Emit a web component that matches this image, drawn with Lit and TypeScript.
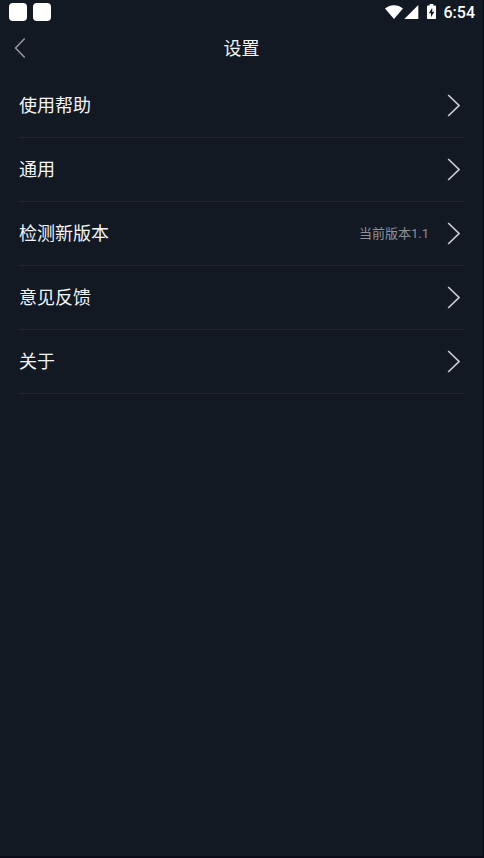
import { LitElement, html, css, nothing } from "lit";
import { customElement, property } from "lit/decorators.js";

interface SettingsItem {
  label: string;
  note?: string;
}

const ITEMS: SettingsItem[] = [
  { label: "使用帮助" },
  { label: "通用" },
  { label: "检测新版本", note: "当前版本1.1" },
  { label: "意见反馈" },
  { label: "关于" },
];

@customElement("status-bar")
export class StatusBar extends LitElement {
  static styles = css`
    :host {
      display: flex;
      align-items: center;
      height: 24px;
      padding: 0 8px 0 9px;
      color: #fff;
    }
    .notices {
      display: flex;
      flex: 1;
      gap: 6px;
    }
    .notice {
      width: 18px;
      height: 18px;
      border-radius: 4px;
      background: #fff;
    }
    svg {
      display: block;
      fill: currentColor;
    }
    .signal {
      margin-left: 1px;
    }
    .battery {
      margin: 0 8px;
    }
    .time {
      font: 500 16px/24px Roboto, sans-serif;
      padding-top: 2px;
    }
  `;

  render() {
    return html`
      <div class="notices">
        <span class="notice"></span>
        <span class="notice"></span>
      </div>
      <svg width="18" height="14" viewBox="0 0 18 14" aria-hidden="true">
        <path d="M0 3.6C5-.9 13-.9 18 3.6L9 14Z" />
      </svg>
      <svg class="signal" width="15" height="14" viewBox="0 0 15 14" aria-hidden="true">
        <path d="M14.3 0V14H.3Z" />
      </svg>
      <svg class="battery" width="9" height="16" viewBox="0 0 9 16" aria-hidden="true">
        <path
          fill-rule="evenodd"
          d="M2.7 0H6.3V1.4H8.2Q9 1.4 9 2.2V14.2Q9 15 8.2 15H.8Q0 15 0 14.2V2.2Q0 1.4 .8 1.4H2.7ZM5.2 3.8L1.9 9.2H4V13.2L7.2 7.7H5.2Z"
        />
      </svg>
      <span class="time">6:54</span>
    `;
  }
}

@customElement("settings-row")
export class SettingsRow extends LitElement {
  @property() label = "";
  @property() note = "";

  static styles = css`
    :host {
      display: block;
      border-bottom: 1px solid #23262f;
    }
    .row {
      display: flex;
      align-items: center;
      width: 100%;
      height: 63px;
      padding: 0 5px 0 0;
      border: 0;
      background: none;
      color: #f4f5f7;
      font: inherit;
      text-align: left;
      cursor: pointer;
    }
    .label {
      flex: 1;
    }
    .note {
      margin-right: 18px;
      color: #8b8f97;
      font-size: 13px;
    }
    svg {
      display: block;
      fill: none;
      stroke: #c9ccd2;
      stroke-width: 1.7;
    }
  `;

  render() {
    return html`
      <button class="row" type="button">
        <span class="label">${this.label}</span>
        ${this.note ? html`<span class="note">${this.note}</span>` : nothing}
        <svg width="13" height="23" viewBox="0 0 13 23" aria-hidden="true">
          <path d="M1.2 1L12 11.5L1.2 22" />
        </svg>
      </button>
    `;
  }
}

@customElement("app-root")
export class AppRoot extends LitElement {
  static styles = css`
    :host {
      display: block;
      box-sizing: border-box;
      min-height: 100vh;
      border-right: 1px solid #080a12;
      border-bottom: 2px solid #0b0c19;
      background: #121923;
      color: #f4f5f7;
      font: 18px/24px Roboto, "Noto Sans CJK SC", sans-serif;
    }
    .header {
      display: grid;
      grid-template-columns: 40px 1fr 40px;
      align-items: center;
      height: 49px;
    }
    .back {
      display: flex;
      align-items: center;
      align-self: start;
      height: 48px;
      padding: 0 0 0 14px;
      border: 0;
      background: none;
      cursor: pointer;
    }
    .back svg {
      fill: none;
      stroke: #9a9da4;
      stroke-width: 1.4;
    }
    .title {
      margin: 0;
      font: inherit;
      text-align: center;
    }
    .list {
      padding: 1px 18px 0 19px;
    }
  `;

  render() {
    return html`
      <status-bar></status-bar>
      <header class="header">
        <button class="back" type="button" aria-label="返回">
          <svg width="12" height="20" viewBox="0 0 12 20" aria-hidden="true">
            <path d="M10.7.5L1.5 10L10.7 19.5" />
          </svg>
        </button>
        <h1 class="title">设置</h1>
      </header>
      <main class="list">
        ${ITEMS.map(
          (item) => html`
            <settings-row .label=${item.label} .note=${item.note ?? ""}></settings-row>
          `,
        )}
      </main>
    `;
  }
}
